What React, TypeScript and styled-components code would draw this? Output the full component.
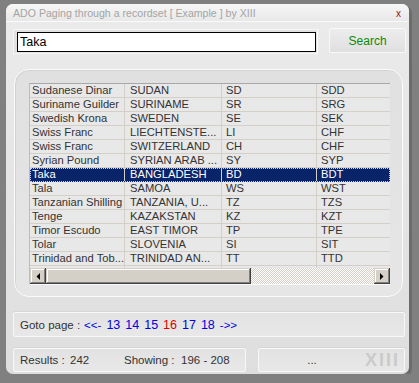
import styled, { createGlobalStyle } from "styled-components";

const GlobalStyle = createGlobalStyle`
  html, body {
    margin: 0;
    padding: 0;
    background: #808080;
  }
  body {
    font-family: "Liberation Sans", Arial, sans-serif;
  }
`;

const Window = styled.div`
    margin: 4px 0 0 6px;
    width: 403px;
    height: 370px;
    border-radius: 7px;
    background: linear-gradient(#ebebeb, #dedede);
    box-shadow: 3px 2px 0 #6c6c6c;
    display: flex;
    flex-direction: column;
    overflow: hidden;
`;

const TitleBar = styled.div`
    height: 17px;
    display: flex;
    align-items: center;
    justify-content: space-between;
    padding: 0 8px 0 7px;
    background: linear-gradient(#f7f7f7, #e8e8e8);
    border-bottom: 1px solid #fafafa;
`;

const Title = styled.span`
    font-size: 10.6px;
    color: #a4a4a4;
`;

const Close = styled.span`
    font-size: 10px;
    color: #9a1010;
    margin-top: 2px;
`;

const Body = styled.div`
    display: flex;
    flex-direction: column;
    padding: 0 3px 0 7px;
`;

const SearchRow = styled.div`
    margin-top: 6px;
    height: 25px;
    display: flex;
    align-items: flex-start;
`;

const InputFrame = styled.div`
    margin-top: 1px;
    width: 300px;
    height: 20px;
    padding: 2px 1px 1px 3px;
    border: 1px solid #f6f6f6;
    border-right-color: #fdfdfd;
    background: #e2e2e2;
`;

const SearchInput = styled.input`
    box-sizing: border-box;
    width: 299px;
    height: 20px;
    border: 1px solid #000;
    padding: 0 2px;
    margin: 0;
    font-family: "Liberation Sans", Arial, sans-serif;
    font-size: 12.5px;
    color: #000;
    background: #fff;
    outline: none;
`;

const SearchButton = styled.button`
    box-sizing: border-box;
    margin-left: 11px;
    width: 77px;
    height: 25px;
    border: 1px solid #f8f8f8;
    border-radius: 2px;
    background: linear-gradient(#ececec, #e0e0e0);
    color: #0a8a0a;
    font-family: "Liberation Sans", Arial, sans-serif;
    font-size: 12px;
    padding: 0;
`;

const GridPanel = styled.div`
    box-sizing: border-box;
    margin: 16px 0 0 1px;
    width: 389px;
    height: 228px;
    border: 1px solid #fbfbfb;
    border-radius: 15px;
    background: linear-gradient(#e0e0e0, #e6e6e6);
    box-shadow: inset 1px 1px 0 #d2d2d2;
    padding: 13px 0 0 14px;
`;

const Grid = styled.div`
    width: 360px;
    border-top: 1px solid #a8a8a8;
    border-left: 1px solid #bdbdbd;
    border-bottom: 1px solid #fafafa;
    background: #e8e8e8;
`;

const Rows = styled.div`
    height: 184px;
    overflow: hidden;
`;

const Row = styled.div<{ $selected?: boolean }>`
    display: flex;
    height: 14px;
    box-sizing: border-box;
    border-bottom: 1px solid ${(p) => (p.$selected ? "#0a246a" : "#d4d0c8")};
    background: ${(p) => (p.$selected ? "#0a246a" : "transparent")};
    color: ${(p) => (p.$selected ? "#fff" : "#333")};
    outline: ${(p) => (p.$selected ? "1px dotted #c8c8ff" : "none")};
    outline-offset: -1px;
`;

const Cell = styled.div<{ $width: number; $pad: number }>`
    box-sizing: border-box;
    width: ${(p) => p.$width}px;
    flex: none;
    padding-left: ${(p) => p.$pad}px;
    border-right: 1px solid #d4d0c8;
    font-size: 11.2px;
    line-height: 13px;
    white-space: nowrap;
    overflow: hidden;

    &:last-child {
        border-right: none;
    }
`;

const ScrollBar = styled.div`
    display: flex;
    height: 16px;
`;

const ScrollButton = styled.div`
    width: 16px;
    height: 16px;
    box-sizing: border-box;
    background: #d4d0c8;
    box-shadow: inset -1px -1px #404040, inset 1px 1px #d4d0c8, inset -2px -2px #808080, inset 2px 2px #fff;
    display: flex;
    align-items: center;
    justify-content: center;
`;

const Thumb = styled.div`
    width: 205px;
    height: 16px;
    background: #d4d0c8;
    box-shadow: inset -1px -1px #404040, inset 1px 1px #d4d0c8, inset -2px -2px #808080, inset 2px 2px #fff;
`;

const Track = styled.div`
    flex: 1;
    background: repeating-conic-gradient(#fff 0 25%, #d4d0c8 0 50%) 0 0 / 2px 2px;
`;

const Pager = styled.div`
    box-sizing: border-box;
    margin-top: 15px;
    height: 25px;
    width: 392px;
    border: 1px solid #f8f8f8;
    border-radius: 2px;
    background: linear-gradient(#e2e2e2, #e8e8e8);
    box-shadow: 0 -1px 0 #d6d6d6;
    display: flex;
    align-items: center;
    padding-left: 6px;
    font-size: 11.5px;
    color: #333;
`;

const PageLink = styled.span<{ $current?: boolean }>`
    font-size: 12.5px;
    margin-right: 5px;
    color: ${(p) => (p.$current ? "#e00000" : "#0000e0")};
`;

const Arrow = styled.span`
    font-size: 11.5px;
    color: #0000e0;
    margin-right: 5px;
`;

const Footer = styled.div`
    margin-top: 11px;
    height: 24px;
    display: flex;
    gap: 12px;
`;

const StatusBox = styled.div<{ $width: number }>`
    box-sizing: border-box;
    width: ${(p) => p.$width}px;
    height: 24px;
    border: 1px solid #f8f8f8;
    border-radius: 2px;
    background: linear-gradient(#e2e2e2, #e8e8e8);
    box-shadow: 0 -1px 0 #d6d6d6;
    display: flex;
    align-items: center;
    font-size: 11.5px;
    color: #333;
`;

const Label = styled.span<{ $gap: number }>`
    margin-right: ${(p) => p.$gap}px;
`;

const Field = styled.span<{ $width: number }>`
    width: ${(p) => p.$width}px;
    flex: none;
    white-space: nowrap;
`;

const Dots = styled.span`
    flex: 1;
    text-align: center;
`;

const Mark = styled.span`
    font-weight: bold;
    font-size: 18px;
    letter-spacing: 2px;
    color: #cacaca;
    margin-right: 4px;
`;

const columns = [
    { width: 95, pad: 2 },
    { width: 97, pad: 5 },
    { width: 95, pad: 4 },
    { width: 72, pad: 4 },
];

const rows = [
    ["Sudanese Dinar", "SUDAN", "SD", "SDD"],
    ["Suriname Guilder", "SURINAME", "SR", "SRG"],
    ["Swedish Krona", "SWEDEN", "SE", "SEK"],
    ["Swiss Franc", "LIECHTENSTE...", "LI", "CHF"],
    ["Swiss Franc", "SWITZERLAND", "CH", "CHF"],
    ["Syrian Pound", "SYRIAN ARAB ...", "SY", "SYP"],
    ["Taka", "BANGLADESH", "BD", "BDT"],
    ["Tala", "SAMOA", "WS", "WST"],
    ["Tanzanian Shilling", "TANZANIA, U...", "TZ", "TZS"],
    ["Tenge", "KAZAKSTAN", "KZ", "KZT"],
    ["Timor Escudo", "EAST TIMOR", "TP", "TPE"],
    ["Tolar", "SLOVENIA", "SI", "SIT"],
    ["Trinidad and Tob...", "TRINIDAD AN...", "TT", "TTD"],
    ["", "", "", ""],
];

const pages = [13, 14, 15, 16, 17, 18];

const App = () => {
    return (
        <>
            <GlobalStyle />
            <Window>
                <TitleBar>
                    <Title>ADO Paging through a recordset [ Example ] by XIII</Title>
                    <Close>x</Close>
                </TitleBar>
                <Body>
                    <SearchRow>
                        <InputFrame>
                            <SearchInput defaultValue="Taka" />
                        </InputFrame>
                        <SearchButton>Search</SearchButton>
                    </SearchRow>
                    <GridPanel>
                        <Grid>
                            <Rows>
                                {rows.map((row, i) => (
                                    <Row key={i} $selected={row[0] === "Taka"}>
                                        {row.map((text, j) => (
                                            <Cell key={j} $width={columns[j].width} $pad={columns[j].pad}>
                                                {text}
                                            </Cell>
                                        ))}
                                    </Row>
                                ))}
                            </Rows>
                            <ScrollBar>
                                <ScrollButton>
                                    <svg width="4" height="7" viewBox="0 0 4 7">
                                        <polygon points="4,0 4,7 0.5,3.5" fill="#000" />
                                    </svg>
                                </ScrollButton>
                                <Thumb />
                                <Track />
                                <ScrollButton>
                                    <svg width="4" height="7" viewBox="0 0 4 7">
                                        <polygon points="0,0 0,7 3.5,3.5" fill="#000" />
                                    </svg>
                                </ScrollButton>
                            </ScrollBar>
                        </Grid>
                    </GridPanel>
                    <Pager>
                        <Label $gap={4}>Goto page :</Label>
                        <Arrow>&lt;&lt;-</Arrow>
                        {pages.map((p) => (
                            <PageLink key={p} $current={p === 16}>
                                {p}
                            </PageLink>
                        ))}
                        <Arrow>-&gt;&gt;</Arrow>
                    </Pager>
                    <Footer>
                        <StatusBox $width={233} style={{ paddingLeft: 6 }}>
                            <Field $width={50}>Results :</Field>
                            <Field $width={54}>242</Field>
                            <Field $width={57}>Showing :</Field>
                            <Field $width={60}>196 - 208</Field>
                        </StatusBox>
                        <StatusBox $width={147}>
                            <Dots>...</Dots>
                            <Mark>XIII</Mark>
                        </StatusBox>
                    </Footer>
                </Body>
            </Window>
        </>
    );
};

export default App;
